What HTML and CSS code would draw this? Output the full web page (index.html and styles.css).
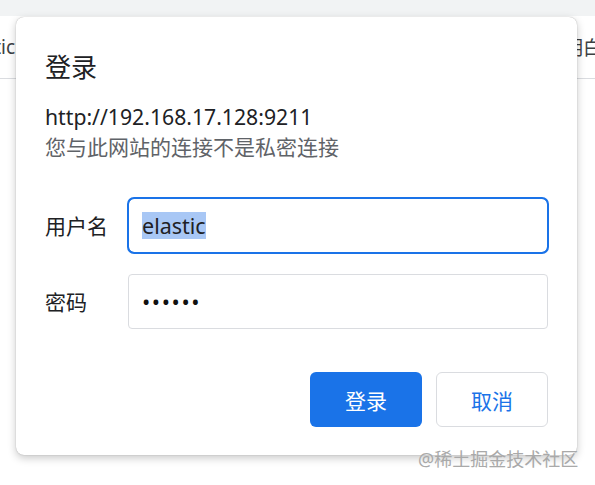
FILE: index.html
```html
<!DOCTYPE html>
<html lang="zh-CN">
<head>
<meta charset="utf-8">
<title>登录</title>
<link rel="stylesheet" href="styles.css">
</head>
<body>
  <div class="topbar"></div>
  <div class="header">
    <span class="header-left">Elastic:</span>
    <span class="header-right">明白白</span>
  </div>

  <div class="dialog">
    <h1 class="title">登录</h1>
    <div class="url">http://192.168.17.128:9211</div>
    <div class="note">您与此网站的连接不是私密连接</div>

    <div class="form">
      <div class="row">
        <span class="label">用户名</span>
        <div class="field field-focus"><span class="sel">elastic</span></div>
      </div>
      <div class="row">
        <span class="label">密码</span>
        <div class="field"><span class="dots">••••••</span></div>
      </div>
    </div>

    <div class="actions">
      <button class="btn btn-primary">登录</button>
      <button class="btn btn-secondary">取消</button>
    </div>
  </div>

  <div class="watermark">@稀土掘金技术社区</div>
</body>
</html>
```

FILE: styles.css
```css
html, body {
  margin: 0;
  padding: 0;
}
body {
  width: 595px;
  height: 485px;
  position: relative;
  overflow: hidden;
  background: #ffffff;
  font-family: "Noto Sans", "Noto Sans CJK SC", sans-serif;
  color: #202124;
}
.topbar {
  height: 16px;
  background: #f1f3f4;
}
.header {
  height: 62px;
  border-bottom: 1px solid #dadce0;
  display: flex;
  align-items: center;
  justify-content: space-between;
  font-size: 19px;
  color: #3c4043;
  overflow: hidden;
  white-space: nowrap;
}
.header-left {
  margin-left: -41px;
}
.header-right {
  margin-right: -26px;
}
.dialog {
  position: absolute;
  left: 16px;
  top: 17px;
  width: 561px;
  height: 438px;
  box-sizing: border-box;
  padding: 34px 29px 0 29px;
  background: #ffffff;
  border-radius: 8px;
  box-shadow: 0 0 1px rgba(0, 0, 0, 0.35), 0 3px 8px rgba(0, 0, 0, 0.22);
}
.title {
  margin: 0;
  font-size: 26px;
  line-height: 32px;
  font-weight: 400;
  color: #202124;
}
.url {
  margin-top: 20px;
  font-size: 21.2px;
  line-height: 28px;
  color: #202124;
}
.note {
  margin-top: 2px;
  font-size: 21px;
  line-height: 28px;
  color: #5f6368;
}
.form {
  margin-top: 37px;
  display: flex;
  flex-direction: column;
  gap: 21px;
}
.row {
  display: flex;
  align-items: center;
}
.label {
  width: 83px;
  font-size: 21px;
  line-height: 28px;
  color: #202124;
}
.field {
  width: 420px;
  height: 55px;
  box-sizing: border-box;
  border: 1px solid #dadce0;
  border-radius: 4px;
  padding-left: 13px;
  display: flex;
  align-items: center;
  font-size: 21.5px;
  color: #202124;
}
.field-focus {
  border-color: #1a73e8;
  border-radius: 6px;
  outline: 2px solid #1a73e8;
  outline-offset: -1px;
}
.sel {
  background: #a8c7f5;
  line-height: 27px;
}
.dots {
  font-size: 22px;
  letter-spacing: 1.6px;
  line-height: 27px;
  color: #111111;
}
.actions {
  margin-top: 43px;
  display: flex;
  justify-content: flex-end;
  gap: 14px;
}
.btn {
  width: 112px;
  height: 55px;
  border-radius: 6px;
  font-family: "Noto Sans", "Noto Sans CJK SC", sans-serif;
  font-size: 21px;
  padding: 0;
  cursor: pointer;
}
.btn-primary {
  background: #1a73e8;
  border: none;
  color: #ffffff;
}
.btn-secondary {
  background: #ffffff;
  border: 1px solid #dadce0;
  color: #1a73e8;
}
.watermark {
  position: absolute;
  left: 418px;
  top: 447px;
  font-size: 18px;
  line-height: 24px;
  color: #a9a9a9;
  white-space: nowrap;
}
```
